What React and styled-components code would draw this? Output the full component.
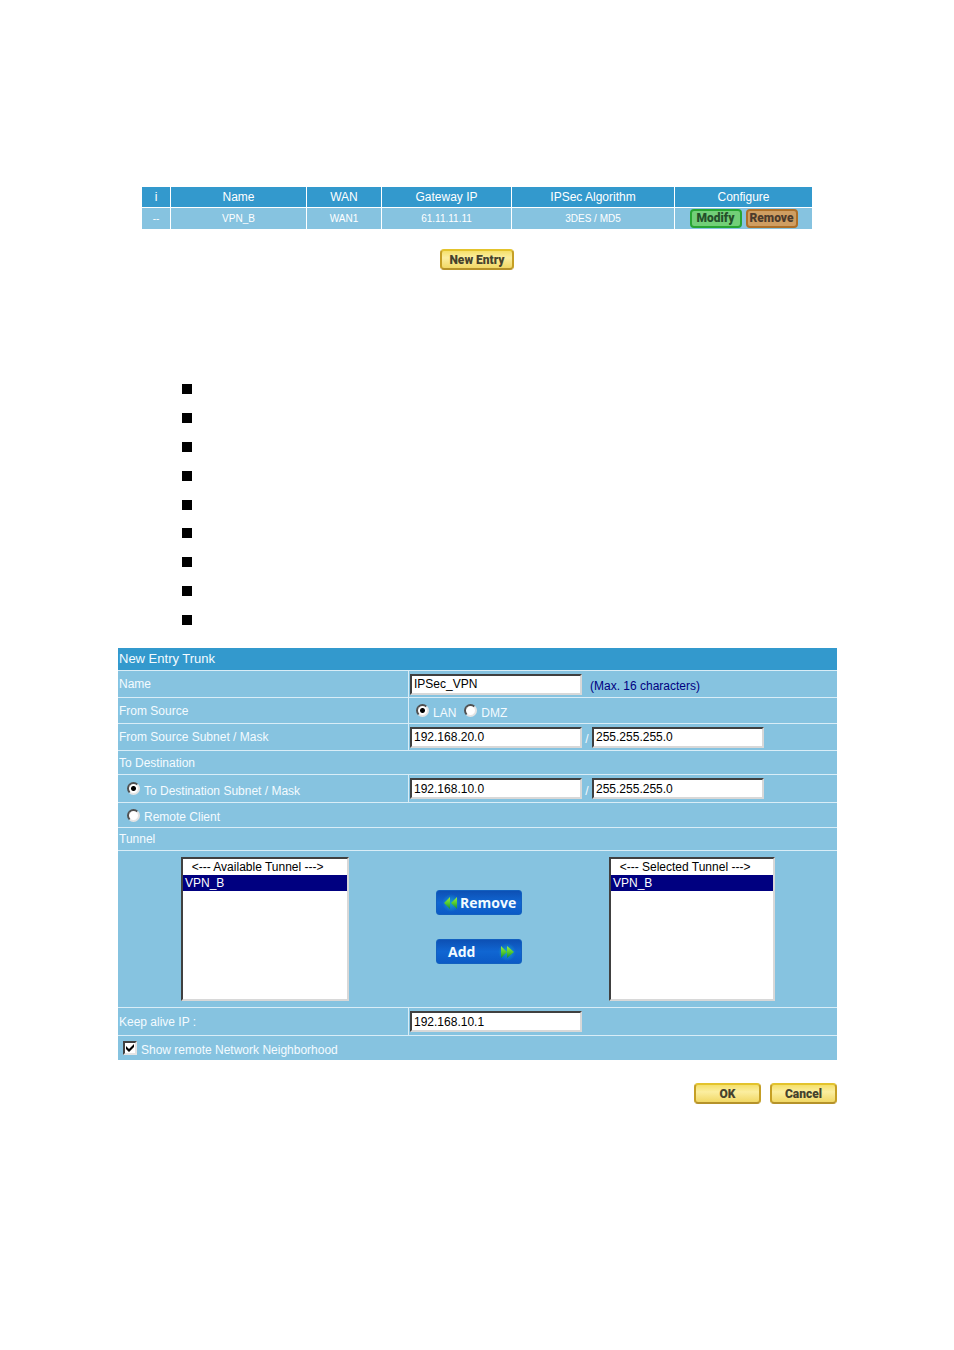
import React from 'react';
import styled, { createGlobalStyle } from 'styled-components'

const columns = [
  { title: 'i', value: '--', width: 28 },
  { title: 'Name', value: 'VPN_B', width: 136 },
  { title: 'WAN', value: 'WAN1', width: 75 },
  { title: 'Gateway IP', value: '61.11.11.11', width: 130 },
  { title: 'IPSec Algorithm', value: '3DES / MD5', width: 163 },
]

const bullets = [1, 2, 3, 4, 5, 6, 7, 8, 9]

function Arrows({ left }) {
  return (
    <svg width="18" height="18" viewBox="0 0 18 18" aria-hidden="true">
      <defs>
        <linearGradient id={left ? 'greenL' : 'greenR'} x1="0" y1="0" x2="0" y2="1">
          <stop offset="0" stopColor="#9cf03c" />
          <stop offset="0.5" stopColor="#55cc30" />
          <stop offset="1" stopColor="#178a3a" />
        </linearGradient>
        <radialGradient id={left ? 'glowL' : 'glowR'}>
          <stop offset="0" stopColor="#18a0d0" />
          <stop offset="1" stopColor="#18a0d0" stopOpacity="0" />
        </radialGradient>
      </defs>
      <circle cx="9" cy="9" r="9" fill={left ? 'url(#glowL)' : 'url(#glowR)'} />
      <path
        d={left ? 'M8 3v12L2 9z M15 3v12L9 9z' : 'M3 3v12l6-6z M9 3v12l7-6z'}
        fill={left ? 'url(#greenL)' : 'url(#greenR)'}
      />
    </svg>
  )
}

export default function App() {
  return (
    <Page>
      <GlobalStyle />
      <Policy>
        <Table>
          <colgroup>
            {columns.map(c => <col key={c.title} style={{ width: c.width }} />)}
            <col style={{ width: 138 }} />
          </colgroup>
          <thead>
            <tr>
              {columns.map(c => <th key={c.title}>{c.title}</th>)}
              <th>Configure</th>
            </tr>
          </thead>
          <tbody>
            <tr>
              {columns.map(c => <td key={c.title}>{c.value}</td>)}
              <td>
                <Actions>
                  <TableButton $color="green">Modify</TableButton>
                  <TableButton $color="brown">Remove</TableButton>
                </Actions>
              </td>
            </tr>
          </tbody>
        </Table>
        <GoldButton $width={74}>New Entry</GoldButton>
      </Policy>

      <Bullets>
        {bullets.map(b => <li key={b} />)}
      </Bullets>

      <Form onSubmit={e => e.preventDefault()}>
        <Title>New Entry Trunk</Title>
        <Row $height={27}>
          <Cell as="label" htmlFor="name">Name</Cell>
          <Fields>
            <Input id="name" defaultValue="IPSec_VPN" />
            <Hint>(Max. 16 characters)</Hint>
          </Fields>
        </Row>
        <Row $height={26}>
          <Cell>From Source</Cell>
          <Fields>
            <Choice $indent={6}><Radio name="source" defaultChecked /><span>LAN</span></Choice>
            <Choice $indent={8}><Radio name="source" /><span>DMZ</span></Choice>
          </Fields>
        </Row>
        <Row $height={27}>
          <Cell as="label" htmlFor="source">From Source Subnet / Mask</Cell>
          <Fields>
            <Input id="source" defaultValue="192.168.20.0" />
            <Slash>/</Slash>
            <Input aria-label="Source mask" defaultValue="255.255.255.0" />
          </Fields>
        </Row>
        <Row $height={24} $full><Cell>To Destination</Cell></Row>
        <Row $height={28}>
          <Cell>
            <Choice $indent={8}><Radio name="dest" defaultChecked /><span>To Destination Subnet / Mask</span></Choice>
          </Cell>
          <Fields>
            <Input aria-label="Destination subnet" defaultValue="192.168.10.0" />
            <Slash>/</Slash>
            <Input aria-label="Destination mask" defaultValue="255.255.255.0" />
          </Fields>
        </Row>
        <Row $height={25} $full>
          <Cell>
            <Choice $indent={8}><Radio name="dest" /><span>Remote Client</span></Choice>
          </Cell>
        </Row>
        <Row $height={23} $full><Cell>Tunnel</Cell></Row>
        <Tunnels>
          <List multiple aria-label="Available Tunnel" $width={168} defaultValue={['b']}>
            <option value="">&nbsp;&nbsp;&lt;--- Available Tunnel ---&gt;</option>
            <option value="b">VPN_B</option>
          </List>
          <Moves>
            <MoveButton type="button"><Arrows left />Remove</MoveButton>
            <MoveButton type="button" $add>Add<Arrows /></MoveButton>
          </Moves>
          <List multiple aria-label="Selected Tunnel" $width={166} defaultValue={['b']}>
            <option value="">&nbsp;&nbsp;&lt;--- Selected Tunnel ---&gt;</option>
            <option value="b">VPN_B</option>
          </List>
        </Tunnels>
        <Row $height={28}>
          <Cell as="label" htmlFor="alive">Keep alive IP :</Cell>
          <Fields><Input id="alive" defaultValue="192.168.10.1" /></Fields>
        </Row>
        <Row $height={25} $full>
          <Cell>
            <Choice $indent={4}><Checkbox defaultChecked /><span>Show remote Network Neighborhood</span></Choice>
          </Cell>
        </Row>
        <Footer>
          <GoldButton $width={67}>OK</GoldButton>
          <GoldButton $width={67}>Cancel</GoldButton>
        </Footer>
      </Form>
    </Page>
  );
}

const GlobalStyle = createGlobalStyle`
  * {
    box-sizing: border-box;
  }

  body {
    margin: 0;
    background: #fff;
    font-family: "Liberation Sans", Arial, sans-serif;
    font-size: 12px;
  }
`

const Page = styled.main`
  padding: 187px 117px 240px 118px;
`

const Policy = styled.section`
  display: flex;
  flex-direction: column;
  align-items: center;
  gap: 20px;
  padding: 0 25px 0 24px;
`

const Table = styled.table`
  width: 100%;
  table-layout: fixed;
  border-collapse: separate;
  border-spacing: 0;
  color: #fff;
  text-align: center;

  th, td {
    height: 21px;
    padding: 0;
    line-height: 20px;
    font-weight: normal;
    border-left: 1px solid #fff;
  }

  th {
    background: #3399cd;
    border-bottom: 1px solid #fff;
  }

  td {
    background: #86c3e0;
    font-size: 10px;
  }

  th:first-child, td:first-child {
    border-left: 0;
  }
`

const Actions = styled.div`
  display: flex;
  justify-content: center;
  gap: 4px;
`

const Button = styled.button`
  display: flex;
  align-items: center;
  justify-content: center;
  padding: 0;
  color: #46422c;
  font-family: Roboto, "Liberation Sans", sans-serif;
  font-size: 12px;
  font-weight: 900;
  white-space: nowrap;
`

const TableButton = styled(Button)`
  width: 52px;
  height: 19px;
  line-height: 15px;
  border: 2px solid ${p => p.$color === 'green' ? '#27a532' : '#ad6f27'};
  border-radius: 4px;
  background: ${p => p.$color === 'green' ? '#72cf78' : '#cf9e62'};
  color: ${p => p.$color === 'green' ? '#24502a' : '#4d3b2c'};
`

const GoldButton = styled(Button)`
  width: ${p => p.$width}px;
  height: 21px;
  line-height: 16px;
  border: 2px solid;
  border-color: #e3c32c #c59f25 #b5922a #c59f25;
  border-radius: 4px;
  background: linear-gradient(#f5e06a, #fbeea0 40%, #f1d865);
`

const Bullets = styled.ul`
  display: flex;
  flex-direction: column;
  justify-content: space-between;
  height: 241px;
  margin: 114px 0 23px 64px;
  padding: 0;
  list-style: none;

  li {
    width: 10px;
    height: 10px;
    background: #000;
  }
`

const Form = styled.form`
  color: #f4fbff;
`

const Title = styled.div`
  height: 22px;
  padding-left: 1px;
  background: #3399cd;
  font-size: 13px;
  line-height: 21px;
`

const Row = styled.div`
  display: grid;
  grid-template-columns: ${p => p.$full ? '1fr' : '290px 1fr'};
  height: ${p => p.$height}px;
  border-top: 1px solid #d9edf7;
  background: #86c3e0;
`

const Cell = styled.div`
  display: flex;
  align-items: center;
  padding-left: 1px;
`

const Fields = styled.div`
  display: flex;
  align-items: center;
  padding-left: 1px;
  border-left: 1px solid #d9edf7;
`

const Input = styled.input`
  width: 172px;
  height: 21px;
  padding: 0 2px;
  font: inherit;
  color: #000;
  background: #fff;
  border: 2px solid;
  border-color: #404040 #d8d8d8 #d8d8d8 #404040;
  border-radius: 0;
`

const Hint = styled.span`
  padding: 4px 0 0 8px;
  color: #000080;
`

const Slash = styled.span`
  width: 10px;
  padding-top: 4px;
  text-align: center;
`

const Choice = styled.label`
  display: flex;
  align-items: center;
  gap: 4px;
  padding-left: ${p => p.$indent}px;

  span {
    padding-top: 4px;
  }
`

const Radio = styled.input.attrs({ type: 'radio' })`
  appearance: none;
  width: 13px;
  height: 13px;
  margin: 0;
  border: 2px solid;
  border-color: #505050 #e4e4e4 #e4e4e4 #505050;
  border-radius: 50%;
  background: #fff;

  &:checked {
    background: radial-gradient(circle, #000 2px, #fff 3px);
  }
`

const Tick = styled.span`
  display: grid;
  width: 14px;
  height: 14px;

  && {
    padding: 0;
  }

  input {
    grid-area: 1 / 1;
    appearance: none;
    width: 14px;
    height: 14px;
    margin: 0;
    border: 2px solid;
    border-color: #404040 #e4e4e4 #e4e4e4 #404040;
    background: #fff;
  }

  svg {
    grid-area: 1 / 1;
    z-index: 1;
    pointer-events: none;
  }
`

function Checkbox(props) {
  return (
    <Tick>
      <input type="checkbox" {...props} />
      <svg width="14" height="14" viewBox="0 0 14 14" aria-hidden="true">
        <path d="M3 5v3l3 3 5-5V3L6 8z" fill="#000" />
      </svg>
    </Tick>
  )
}

const Tunnels = styled.div`
  display: flex;
  align-items: flex-start;
  justify-content: space-between;
  height: 157px;
  padding: 6px 62px 0 63px;
  border-top: 1px solid #d9edf7;
  background: #86c3e0;
`

const List = styled.select`
  width: ${p => p.$width}px;
  height: 144px;
  padding: 0;
  font: inherit;
  color: #000;
  background: #fff;
  border: 2px solid;
  border-color: #404040 #d8d8d8 #d8d8d8 #404040;
  border-radius: 0;
  overflow: hidden;

  option {
    height: 16px;
    min-height: 0;
    padding: 1px 2px 0;
    line-height: 15px;
  }

  option:checked {
    color: #fff;
    background: linear-gradient(#000080, #000080);
  }
`

const Moves = styled.div`
  display: flex;
  flex-direction: column;
  gap: 24px;
  padding-top: 33px;
`

const MoveButton = styled.button`
  display: flex;
  align-items: center;
  justify-content: space-between;
  width: 86px;
  height: 25px;
  padding: ${p => p.$add ? '0 5px 0 11px' : '0 6px 0 5px'};
  color: #f2fbff;
  font-family: "Open Sans", sans-serif;
  font-size: 14px;
  font-weight: 700;
  border: 1px solid #1260c0;
  border-radius: 3px;
  background: linear-gradient(#0d50b4, #1066d2 50%, #0b5ac6);

  svg {
    flex: none;
  }
`

const Footer = styled.div`
  display: flex;
  justify-content: flex-end;
  gap: 9px;
  padding-top: 23px;
`
